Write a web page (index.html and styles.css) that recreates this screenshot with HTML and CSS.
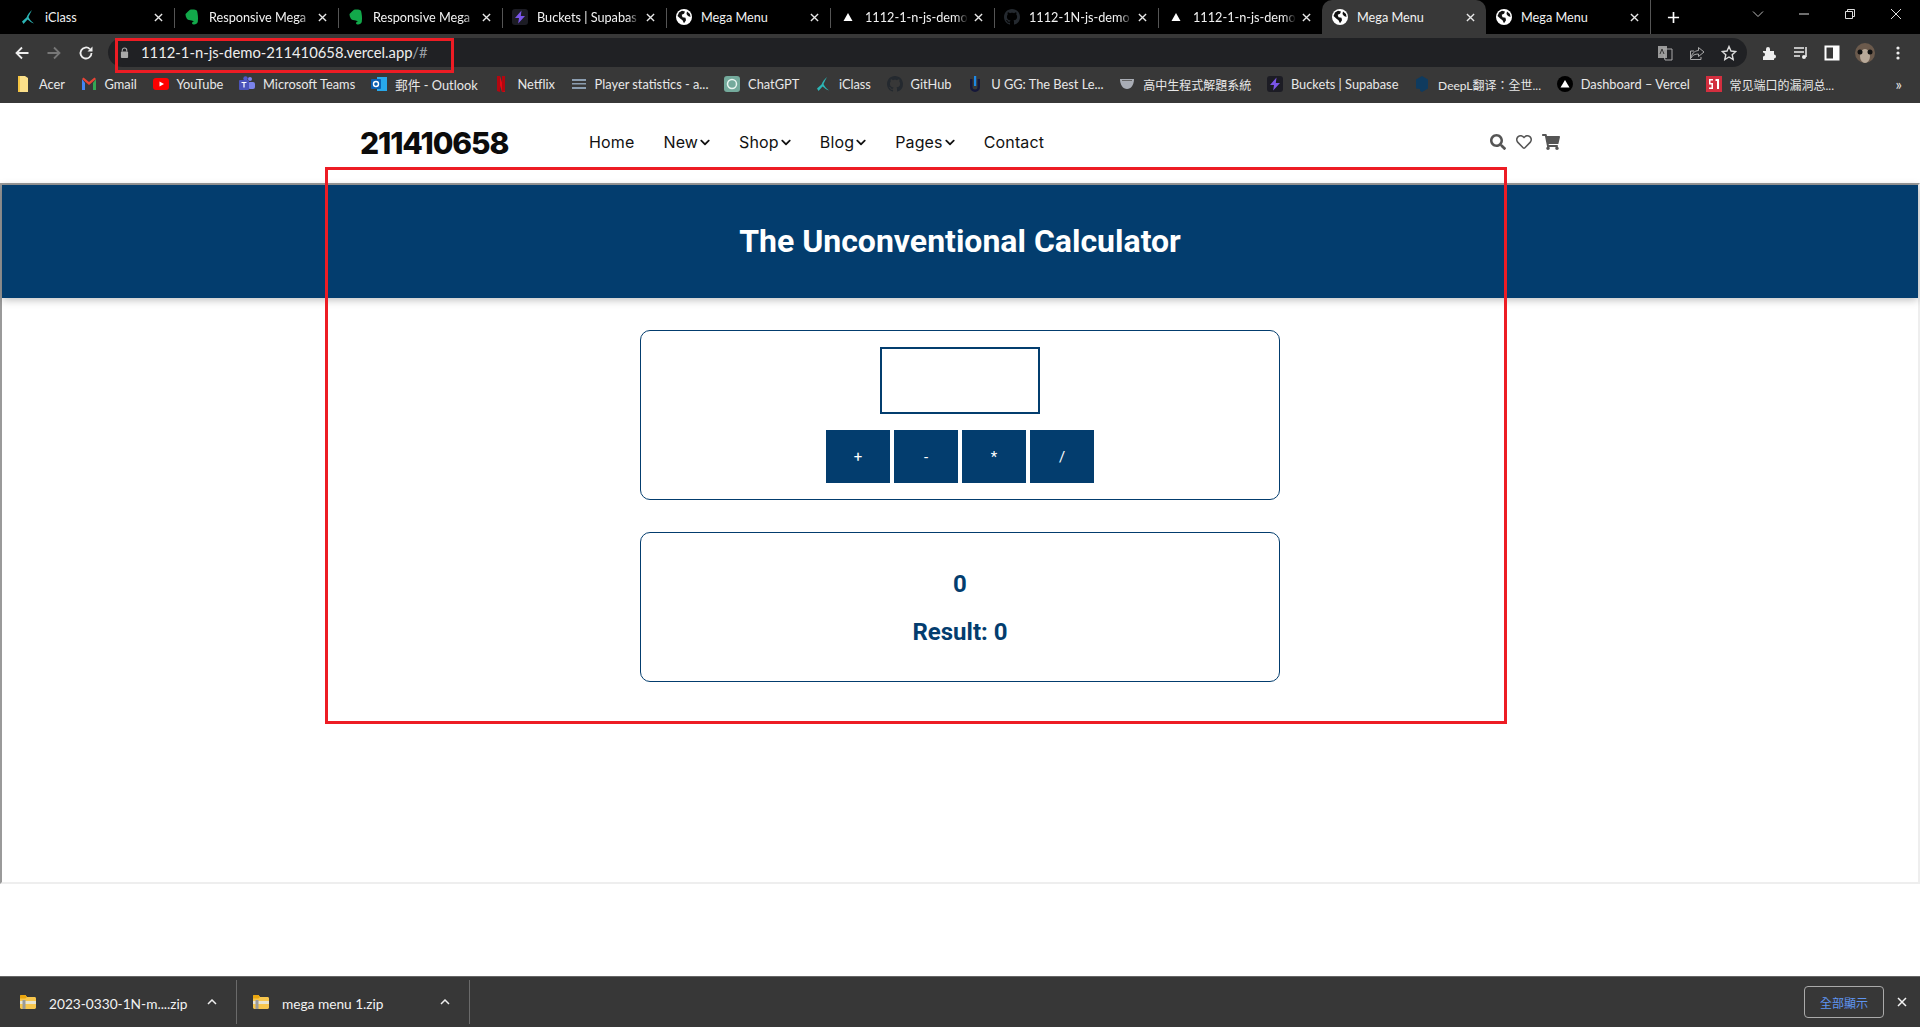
FILE: index.html
```html
<!DOCTYPE html>
<html lang="en">

<head>
    <meta charset="UTF-8">
    <title>Mega Menu</title>
    <link rel="stylesheet" href="styles.css">
</head>

<body>
    <svg class="sprite" xmlns="http://www.w3.org/2000/svg">
        <symbol id="i-globe" viewBox="0 0 16 16">
            <circle cx="8" cy="8" r="8" fill="#fff"/>
            <path d="M3 3.500l3-1.700 3 .7-1 2.200-2.300 1 .8 2.500 3 .5.500 2.500-2 3-1.500-3-2-1.500L1.500 7z M11 2.500l3 2.500.5 3-2.500-1-1.500-2z" fill="#111"/>
        </symbol>
        <symbol id="i-triangle" viewBox="0 0 16 16">
            <path d="M8 4l4.500 8h-9z" fill="#fff"/>
        </symbol>
        <symbol id="i-iclass" viewBox="0 0 16 16">
            <path d="M12 1C9.500 3 7.500 6 6.500 8.500L2 12.500 3.500 15 7.500 10.500C9.500 12 11 13.500 14 14.500 11.500 12.500 9.500 10.500 8.500 8 9.500 5.500 11 3 12 1z" fill="#2cb5b5"/>
        </symbol>
        <symbol id="i-evernote" viewBox="0 0 16 16">
            <path d="M4 2.500L6 .8c2-.6 6-.4 7 1 .8 3 1.400 7 .8 11-.5 2.500-3.300 3.200-5 2.500-1.500-1-.5-3 1.500-2.800-1.500-.5-3.500-1.500-5.300-1.500C2.500 10.500 1.500 7 1.500 5z" fill="#12a84a"/>
        </symbol>
        <symbol id="i-bolt" viewBox="0 0 16 16">
            <rect width="16" height="16" rx="3" fill="#1c1c24"/>
            <path d="M9.500 1.500L3 9h4l-.8 5.500L13 7H8.800z" fill="#7a55e8"/>
        </symbol>
        <symbol id="i-github" viewBox="0 0 16 16">
            <path d="M8 0C3.580 0 0 3.580 0 8c0 3.540 2.290 6.530 5.470 7.590.4.070.55-.17.55-.38 0-.19-.01-.82-.01-1.490-2.010.37-2.530-.49-2.690-.94-.09-.23-.48-.94-.82-1.130-.28-.15-.68-.52-.01-.53.630-.01 1.080.580 1.230.820.720 1.210 1.870.870 2.330.660.070-.520.280-.870.510-1.070-1.780-.2-3.640-.89-3.640-3.950 0-.870.310-1.590.820-2.150-.08-.2-.360-1.020.080-2.120 0 0 .670-.210 2.200.820.640-.180 1.320-.270 2-.270s1.360.090 2 .270c1.530-1.040 2.200-.820 2.200-.820.440 1.100.160 1.920.080 2.120.510.560.820 1.270.820 2.150 0 3.070-1.870 3.750-3.650 3.950.290.250.540.730.540 1.480 0 1.070-.010 1.930-.010 2.200 0 .210.150.460.550.380A8.010 8.010 0 0016 8c0-4.420-3.580-8-8-8z" fill="#24292f"/>
        </symbol>
        <symbol id="i-folder" viewBox="0 0 16 14">
            <path d="M0 1.500C0 .7.600 0 1.400 0h4l1.600 2h7.600c.8 0 1.400.6 1.400 1.400v9.200c0 .8-.6 1.400-1.400 1.400H1.400C.6 14 0 13.400 0 12.600z" fill="#f7c64d"/>
            <path d="M0 1.500C0 .7.600 0 1.400 0h4l1.600 2-1.600 1.500H0z" fill="#eaa50d"/>
            <rect x="0" y="6" width="16" height="3" fill="#e8e4d0"/>
            <rect x="2.500" y="5" width="3" height="9" fill="#9a9a9a"/>
        </symbol>
        <symbol id="i-chevron" viewBox="0 0 448 512">
            <path d="M207.029 381.476L12.686 187.132c-9.373-9.373-9.373-24.569 0-33.941l22.667-22.667c9.357-9.357 24.522-9.375 33.901-.04L224 284.505l154.745-154.021c9.379-9.335 24.544-9.317 33.901.04l22.667 22.667c9.373 9.373 9.373 24.569 0 33.941L240.971 381.476c-9.373 9.372-24.569 9.372-33.942 0z"/>
        </symbol>
        <symbol id="i-close" viewBox="0 0 10 10">
            <path d="M1 1l8 8M9 1L1 9" stroke="currentColor" stroke-width="1.500" fill="none"/>
        </symbol>
    </svg>

    <div class="tabstrip">
        <div class="tab">
            <svg class="favicon"><use href="#i-iclass"/></svg>
            <span class="tab-title">iClass</span>
            <svg class="tab-close"><use href="#i-close"/></svg>
        </div>
        <div class="tab sep">
            <svg class="favicon"><use href="#i-evernote"/></svg>
            <span class="tab-title fade">Responsive Mega</span>
            <svg class="tab-close"><use href="#i-close"/></svg>
        </div>
        <div class="tab sep">
            <svg class="favicon"><use href="#i-evernote"/></svg>
            <span class="tab-title fade">Responsive Mega</span>
            <svg class="tab-close"><use href="#i-close"/></svg>
        </div>
        <div class="tab sep">
            <svg class="favicon"><use href="#i-bolt"/></svg>
            <span class="tab-title fade">Buckets | Supabas</span>
            <svg class="tab-close"><use href="#i-close"/></svg>
        </div>
        <div class="tab sep">
            <svg class="favicon"><use href="#i-globe"/></svg>
            <span class="tab-title">Mega Menu</span>
            <svg class="tab-close"><use href="#i-close"/></svg>
        </div>
        <div class="tab sep">
            <svg class="favicon"><use href="#i-triangle"/></svg>
            <span class="tab-title fade">1112-1-n-js-demo</span>
            <svg class="tab-close"><use href="#i-close"/></svg>
        </div>
        <div class="tab sep">
            <svg class="favicon"><use href="#i-github"/></svg>
            <span class="tab-title fade">1112-1N-js-demo</span>
            <svg class="tab-close"><use href="#i-close"/></svg>
        </div>
        <div class="tab sep">
            <svg class="favicon"><use href="#i-triangle"/></svg>
            <span class="tab-title fade">1112-1-n-js-demo</span>
            <svg class="tab-close"><use href="#i-close"/></svg>
        </div>
        <div class="tab active">
            <svg class="favicon"><use href="#i-globe"/></svg>
            <span class="tab-title">Mega Menu</span>
            <svg class="tab-close"><use href="#i-close"/></svg>
        </div>
        <div class="tab">
            <svg class="favicon"><use href="#i-globe"/></svg>
            <span class="tab-title">Mega Menu</span>
            <svg class="tab-close"><use href="#i-close"/></svg>
        </div>
        <div class="new-tab">
            <svg viewBox="0 0 14 14"><path d="M7 1v12M1 7h12" stroke="#fff" stroke-width="1.800"/></svg>
        </div>
        <div class="window-controls">
            <svg viewBox="0 0 12 12"><path d="M1 3.500l5 5 5-5" stroke="#bbb" fill="none"/></svg>
            <svg viewBox="0 0 12 12"><path d="M1 6h10" stroke="#ddd"/></svg>
            <svg viewBox="0 0 12 12"><path d="M1.500 3.500h7v7h-7zM3.500 3.500v-2h7v7h-2" stroke="#ddd" fill="none"/></svg>
            <svg viewBox="0 0 12 12"><path d="M1 1l10 10M11 1L1 11" stroke="#ddd" fill="none"/></svg>
        </div>
    </div>

    <div class="toolbar">
        <div class="nav-buttons">
            <svg viewBox="0 0 16 16"><path d="M14.500 8H2.500M8 2.500L2.500 8 8 13.500" stroke="#eee" stroke-width="1.800" fill="none"/></svg>
            <svg viewBox="0 0 16 16"><path d="M1.500 8h12M8 2.500L13.500 8 8 13.500" stroke="#777" stroke-width="1.800" fill="none"/></svg>
            <svg viewBox="0 0 16 16"><path d="M13.500 8a5.500 5.500 0 1 1-1.600-3.900" stroke="#eee" stroke-width="1.800" fill="none"/><path d="M14.500 1.500v5h-5z" fill="#eee"/></svg>
        </div>
        <div class="omnibox">
            <svg class="lock" viewBox="0 0 10 12"><path d="M2.500 5V3.500a2.500 2.500 0 0 1 5 0V5" stroke="#aaa" stroke-width="1.200" fill="none"/><rect x="1" y="5" width="8" height="7" rx="1" fill="#aaa"/></svg>
            <span class="url">1112-1-n-js-demo-211410658.vercel.app<span class="url-rest">/#</span></span>
            <div class="omni-actions">
                <svg viewBox="0 0 16 16"><rect x="1" y="1" width="9" height="12" fill="#999"/><path d="M6 4h9v11H8z" fill="none" stroke="#aaa"/><path d="M3 9l2-5 2 5" stroke="#333" fill="none"/></svg>
                <svg viewBox="0 0 16 16"><path d="M9.500 2.500L15 7l-5.500 4.500V9C6 9 3.500 10 2 13c.5-4 3-7 7.500-7.500zM12 12v2.500H1.500V6H5" stroke="#aaa" fill="none"/></svg>
                <svg viewBox="0 0 16 16"><path d="M8 1.500l2 4.500 4.800.5-3.600 3.200 1 4.800L8 12l-4.200 2.500 1-4.800L1.200 6.500 6 6z" stroke="#ddd" stroke-width="1.400" fill="none"/></svg>
            </div>
        </div>
        <div class="toolbar-actions">
            <svg viewBox="0 0 16 16"><path d="M1 6h3V4a2 2 0 0 1 4 0v2h4v3.500a2 2 0 0 1 0 4V15H1v-3.500a2 2 0 0 0 0-4z" fill="#eee"/></svg>
            <svg viewBox="0 0 16 16"><path d="M1 3h10M1 7h10M1 11h6" stroke="#eee" stroke-width="1.400"/><path d="M13 2v10" stroke="#eee" stroke-width="1.500"/><circle cx="11" cy="12" r="2" fill="#eee"/></svg>
            <svg viewBox="0 0 16 16"><rect x="1.500" y="1.500" width="13" height="13" fill="none" stroke="#fff" stroke-width="2"/><rect x="9" y="2" width="5" height="12" fill="#fff"/></svg>
            <svg class="avatar" viewBox="0 0 20 20"><ellipse cx="10" cy="10" rx="10" ry="10" fill="#6b5a4c"/><ellipse cx="10" cy="13" rx="5" ry="7" fill="#b8a999"/><circle cx="5" cy="9" r="2.500" fill="#111"/><circle cx="15" cy="9" r="2.500" fill="#111"/></svg>
            <svg viewBox="0 0 16 16"><circle cx="8" cy="3" r="1.600" fill="#eee"/><circle cx="8" cy="8" r="1.600" fill="#eee"/><circle cx="8" cy="13" r="1.600" fill="#eee"/></svg>
        </div>
    </div>

    <div class="bookmarks">
        <div class="bookmark">
            <svg class="favicon" viewBox="0 0 16 16"><path d="M3 0h7l3 2v14H3z" fill="#fbe08a"/><path d="M3 0h2v16H3z" fill="#f5c542"/></svg>
            <span>Acer</span>
        </div>
        <div class="bookmark">
            <svg class="favicon" viewBox="0 0 16 16"><path d="M1 3v11h3V7z" fill="#4285f4"/><path d="M15 3v11h-3V7z" fill="#34a853"/><path d="M1 3l7 6 7-6-1.500-1.500L8 6 2.500 1.500z" fill="#ea4335"/></svg>
            <span>Gmail</span>
        </div>
        <div class="bookmark">
            <svg class="favicon" viewBox="0 0 16 16"><rect y="2" width="16" height="12" rx="3" fill="#f00"/><path d="M6.500 5.500L11 8l-4.500 2.500z" fill="#fff"/></svg>
            <span>YouTube</span>
        </div>
        <div class="bookmark">
            <svg class="favicon" viewBox="0 0 16 16"><circle cx="11" cy="3" r="2" fill="#7b83eb"/><rect x="9" y="6" width="7" height="7" rx="2" fill="#7b83eb"/><circle cx="6.500" cy="2.500" r="2.200" fill="#5059c9"/><rect x="0" y="4" width="10" height="10" rx="1" fill="#4b53bc"/><path d="M2.500 6.500h5M5 6.500v5" stroke="#fff" stroke-width="1.200"/></svg>
            <span>Microsoft Teams</span>
        </div>
        <div class="bookmark">
            <svg class="favicon" viewBox="0 0 16 16"><rect x="6" y="1" width="10" height="14" fill="#28a8ea"/><rect x="0" y="3" width="10" height="10" rx="1" fill="#0a5fb0"/><circle cx="5" cy="8" r="2.500" fill="none" stroke="#fff" stroke-width="1.400"/></svg>
            <span>郵件 - Outlook</span>
        </div>
        <div class="bookmark">
            <svg class="favicon" viewBox="0 0 16 16"><path d="M4 0h3l5 16H9z" fill="#e50914"/><path d="M4 0h3v16l-3-1zM9 0h3v15l-3 1z" fill="#b20710"/></svg>
            <span>Netflix</span>
        </div>
        <div class="bookmark">
            <svg class="favicon" viewBox="0 0 16 16"><path d="M1 3h14v2H1zM1 7h14v1.500H1zM1 11h14v2H1z" fill="#8b9db0"/></svg>
            <span>Player statistics - a...</span>
        </div>
        <div class="bookmark">
            <svg class="favicon" viewBox="0 0 16 16"><rect width="16" height="16" rx="3" fill="#74aa9c"/><circle cx="8" cy="8" r="4.500" fill="none" stroke="#e8f4f0" stroke-width="1.500"/></svg>
            <span>ChatGPT</span>
        </div>
        <div class="bookmark">
            <svg class="favicon"><use href="#i-iclass"/></svg>
            <span>iClass</span>
        </div>
        <div class="bookmark">
            <svg class="favicon"><use href="#i-github"/></svg>
            <span>GitHub</span>
        </div>
        <div class="bookmark">
            <svg class="favicon" viewBox="0 0 16 16"><path d="M3 3v8a5 5 0 0 0 10 0V3h-2.500v8a2.500 2.500 0 0 1-5 0V3z" fill="#15173a"/><rect x="7" y="0" width="2.200" height="10" fill="#1e88e5"/></svg>
            <span>U GG: The Best Le...</span>
        </div>
        <div class="bookmark">
            <svg class="favicon" viewBox="0 0 16 16"><path d="M1 3h14c0 6-3 10-7 10S1 9 1 3z" fill="#a9adb5"/><path d="M3 4.500h10" stroke="#666"/></svg>
            <span class="cjk">高中生程式解題系統</span>
        </div>
        <div class="bookmark">
            <svg class="favicon"><use href="#i-bolt"/></svg>
            <span>Buckets | Supabase</span>
        </div>
        <div class="bookmark">
            <svg class="favicon" viewBox="0 0 16 16"><path d="M8 0l6 3.500v9L8 16l-2-1.200V13L2 12.500v-9z" fill="#0f3b5f"/></svg>
            <span class="cjk">DeepL翻译：全世...</span>
        </div>
        <div class="bookmark">
            <svg class="favicon" viewBox="0 0 16 16"><circle cx="8" cy="8" r="8" fill="#000"/><path d="M8 4l4.500 7.500h-9z" fill="#fff"/></svg>
            <span>Dashboard – Vercel</span>
        </div>
        <div class="bookmark">
            <svg class="favicon" viewBox="0 0 16 16"><rect width="16" height="16" fill="#d32f3f"/><path d="M3 3h4v1.500H4.500V7H7v6H3v-1.500h2.500V8.500H3zM9.500 3H13v10h-2V5H9.500z" fill="#fff"/></svg>
            <span class="cjk">常见端口的漏洞总...</span>
        </div>
        <div class="bookmark-more">»</div>
    </div>

    <header class="site-header">
        <div class="site-inner">
            <div class="site-left">
                <div class="logo">211410658</div>
                <nav class="site-nav">
                    <a>Home</a>
                    <a>New <svg class="caret"><use href="#i-chevron"/></svg></a>
                    <a>Shop <svg class="caret"><use href="#i-chevron"/></svg></a>
                    <a>Blog <svg class="caret"><use href="#i-chevron"/></svg></a>
                    <a>Pages <svg class="caret"><use href="#i-chevron"/></svg></a>
                    <a>Contact</a>
                </nav>
            </div>
            <div class="site-icons">
                <svg viewBox="0 0 512 512"><path d="M505 442.700L405.300 343c-4.500-4.500-10.600-7-17-7H372c27.600-35.300 44-79.700 44-128C416 93.100 322.900 0 208 0S0 93.100 0 208s93.100 208 208 208c48.300 0 92.700-16.400 128-44v16.300c0 6.400 2.500 12.500 7 17l99.700 99.700c9.400 9.400 24.600 9.400 33.900 0l28.300-28.300c9.400-9.400 9.400-24.600.1-34zM208 336c-70.700 0-128-57.200-128-128 0-70.700 57.200-128 128-128 70.700 0 128 57.200 128 128 0 70.700-57.200 128-128 128z"/></svg>
                <svg viewBox="0 0 512 512"><path d="M458.400 64.300C400.600 15.700 311.300 23 256 79.300 200.700 23 111.400 15.600 53.600 64.300-21.600 127.600-10.600 230.800 43 285.500l175.400 178.700c10 10.200 23.400 15.900 37.600 15.900 14.300 0 27.600-5.600 37.600-15.800L469 285.600c53.500-54.700 64.700-157.900-10.600-221.300zm-23.600 187.500L259.400 430.500c-2.400 2.400-4.400 2.400-6.800 0L77.200 251.800c-36.500-37.200-43.900-107.600 7.300-150.700 38.900-32.700 98.900-27.800 136.500 10.500l35 35.700 35-35.700c37.800-38.500 97.800-43.200 136.500-10.600 51.100 43.100 43.500 113.900 7.300 150.800z"/></svg>
                <svg class="cart" viewBox="0 0 576 512"><path d="M528.120 301.319l47.273-208C578.806 78.301 567.391 64 551.990 64H159.208l-9.166-44.810C147.758 8.021 137.930 0 126.529 0H24C10.745 0 0 10.745 0 24v16c0 13.255 10.745 24 24 24h69.883l70.248 343.435C147.325 417.100 136 435.222 136 456c0 30.928 25.072 56 56 56s56-25.072 56-56c0-15.674-6.447-29.835-16.824-40h209.647C430.447 426.165 424 440.326 424 456c0 30.928 25.072 56 56 56s56-25.072 56-56c0-22.172-12.888-41.332-31.579-50.405l5.517-24.276c3.413-15.018-8.002-29.319-23.403-29.319H218.117l-6.545-32h293.145c11.206 0 20.920-7.754 23.403-18.681z"/></svg>
            </div>
        </div>
    </header>

    <div class="demo-frame">
        <div class="calc-header">
            <h1>The Unconventional Calculator</h1>
        </div>
        <section class="card">
            <input class="calc-input" type="number">
            <div class="calc-actions">
                <button>+</button>
                <button>-</button>
                <button>*</button>
                <button>/</button>
            </div>
        </section>
        <section class="card results">
            <h2>0</h2>
            <h2>Result: 0</h2>
        </section>
    </div>

    <div class="spacer"></div>

    <footer class="download-bar">
        <div class="download">
            <svg class="dl-icon"><use href="#i-folder"/></svg>
            <span class="dl-name">2023-0330-1N-m....zip</span>
            <svg class="dl-caret" viewBox="0 0 10 6"><path d="M1 5l4-4 4 4" stroke="#eee" stroke-width="1.500" fill="none"/></svg>
        </div>
        <div class="download">
            <svg class="dl-icon"><use href="#i-folder"/></svg>
            <span class="dl-name">mega menu 1.zip</span>
            <svg class="dl-caret" viewBox="0 0 10 6"><path d="M1 5l4-4 4 4" stroke="#eee" stroke-width="1.500" fill="none"/></svg>
        </div>
        <button class="show-all">全部顯示</button>
        <svg class="dl-close"><use href="#i-close"/></svg>
    </footer>

    <!-- red annotation boxes drawn on top of the screenshot -->
    <div class="mark mark-url"></div>
    <div class="mark mark-page"></div>
</body>

</html>
```

FILE: styles.css
```css
* {
    box-sizing: border-box;
}

body {
    margin: 0;
    height: 100vh;
    display: flex;
    flex-direction: column;
    background-color: white;
    font-family: 'Roboto', sans-serif;
    overflow: hidden;
    position: relative;
}

.sprite {
    display: none;
}

/* browser chrome */
.tabstrip {
    height: 34px;
    background-color: #000;
    display: flex;
    padding-left: 10px;
    color: #f2f2f2;
    font-family: 'Lato', 'Noto Sans CJK TC', sans-serif;
    font-size: 12.7px;
}

.tab {
    width: 164px;
    height: 34px;
    display: flex;
    align-items: center;
    padding: 0 11px 0 10px;
    position: relative;
}

.tab.sep::before {
    content: "";
    position: absolute;
    left: 0;
    top: 8px;
    height: 20px;
    width: 1px;
    background-color: #555;
}

.tab.active {
    background-color: #383838;
    border-radius: 10px 10px 0 0;
}

.favicon {
    width: 16px;
    height: 16px;
    flex: none;
}

.tab-title {
    flex: 1;
    margin-left: 9px;
    white-space: nowrap;
}

.tab-title.fade {
    -webkit-mask-image: linear-gradient(to right, black 88%, transparent);
    mask-image: linear-gradient(to right, black 88%, transparent);
}

.tab-close {
    width: 9px;
    height: 9px;
    flex: none;
    margin-left: 6px;
    color: #e8e8e8;
}

.new-tab {
    width: 46px;
    height: 34px;
    display: flex;
    align-items: center;
    justify-content: center;
    border-left: 1px solid #555;
    background-clip: padding-box;
}

.new-tab svg {
    width: 13px;
    height: 13px;
}

.window-controls {
    margin-left: auto;
    display: flex;
    align-items: flex-start;
    gap: 34px;
    padding: 8px 18px 0 0;
}

.window-controls svg {
    width: 12px;
    height: 12px;
}

.toolbar {
    height: 33px;
    background-color: #383838;
    display: flex;
    align-items: center;
    padding: 4px 0 0;
}

.nav-buttons {
    display: flex;
    width: 108px;
    padding-left: 14px;
    gap: 16px;
}

.nav-buttons svg {
    width: 16px;
    height: 16px;
}

.omnibox {
    width: 1639px;
    height: 29px;
    background-color: #202124;
    border-radius: 15px;
    display: flex;
    align-items: center;
    padding: 0 10px 0 12px;
}

.lock {
    width: 9px;
    height: 11px;
}

.url {
    margin-left: 12px;
    padding-bottom: 2px;
    font-family: 'Lato', sans-serif;
    font-size: 14.8px;
    color: #eee;
}

.url-rest {
    color: #9aa0a6;
}

.omni-actions {
    margin-left: auto;
    display: flex;
    gap: 16px;
}

.omni-actions svg {
    width: 16px;
    height: 16px;
}

.toolbar-actions {
    flex: 1;
    display: flex;
    align-items: center;
    padding-left: 15px;
    gap: 15px;
}

.toolbar-actions svg {
    width: 16px;
    height: 16px;
}

.toolbar-actions .avatar {
    width: 20px;
    height: 20px;
}

.bookmarks {
    height: 36px;
    background-color: #383838;
    display: flex;
    align-items: center;
    padding: 0 0 2px 15px;
    gap: 15.7px;
    color: #e8e8e8;
    font-family: 'Lato', 'Noto Sans CJK TC', sans-serif;
    font-size: 12.8px;
    white-space: nowrap;
}

.bookmark {
    display: flex;
    align-items: center;
    gap: 8px;
}

.bookmark .cjk {
    font-size: 12px;
}

.bookmark-more {
    margin-left: auto;
    padding-right: 18px;
    font-size: 15px;
}

/* page inside the browser */
.site-header {
    height: 80px;
    flex: none;
    display: flex;
    justify-content: center;
    align-items: center;
    padding-bottom: 2px;
}

.site-inner {
    width: 1200px;
    display: flex;
    justify-content: space-between;
    align-items: center;
}

.site-left {
    display: flex;
    align-items: center;
}

.logo {
    width: 229px;
    margin-top: 2px;
    font-family: 'Inter', sans-serif;
    font-weight: 800;
    font-size: 30px;
    letter-spacing: -1.1px;
    color: #0c0c0c;
}

.site-nav {
    display: flex;
    gap: 29px;
    font-family: 'Inter', sans-serif;
    font-size: 16px;
    letter-spacing: 0.15px;
    color: #111;
}

.site-nav a {
    display: flex;
    align-items: center;
    gap: 2px;
}

.caret {
    width: 10px;
    height: 11px;
    fill: #111;
}

.site-icons {
    display: flex;
    align-items: center;
    gap: 10px;
}

.site-icons svg {
    width: 16px;
    height: 16px;
    fill: #555;
}

.site-icons .cart {
    width: 18px;
}

.demo-frame {
    height: 701px;
    flex: none;
    border: 2px solid;
    border-color: #9a9a9a #eeeeee #eeeeee #9a9a9a;
}

.calc-header {
    height: 113px;
    background-color: #033d6e;
    box-shadow: 0 2px 8px rgba(0, 0, 0, 0.26);
    display: flex;
    align-items: center;
    justify-content: center;
    margin-bottom: 32px;
    padding-bottom: 2px;
}

h1 {
    margin: 0;
    color: white;
    font-size: 32px;
    font-weight: 700;
}

.card {
    width: 640px;
    margin: 0 auto 32px;
    padding: 16px;
    border: 1px solid #033d6e;
    border-radius: 10px;
    text-align: center;
}

.calc-input {
    display: block;
    width: 160px;
    height: 67px;
    margin: 0 auto;
    border: 2px solid #033d6e;
    background: white;
    outline: none;
}

.calc-actions {
    display: flex;
    justify-content: center;
    gap: 4px;
    margin-top: 16px;
}

.calc-actions button {
    width: 64px;
    height: 53px;
    border: none;
    background-color: #033d6e;
    color: white;
    font-family: 'Roboto', sans-serif;
    font-size: 15px;
}

.results {
    padding: 37px 16px 35px;
}

h2 {
    margin: 0;
    color: #033d6e;
    font-size: 24px;
    font-weight: 700;
    line-height: 28px;
}

h2 + h2 {
    margin-top: 20px;
}

.spacer {
    flex: 1;
}

.download-bar {
    height: 51px;
    flex: none;
    background-color: #373737;
    border-top: 1px solid #666;
    display: flex;
    align-items: center;
    padding-left: 4px;
    color: #f2f2f2;
    font-family: 'Lato', sans-serif;
    font-size: 13.7px;
}

.download {
    width: 233px;
    height: 44px;
    display: flex;
    align-items: center;
    padding-left: 16px;
    border-right: 1px solid #6a6a6a;
}

.dl-icon {
    width: 16px;
    height: 14px;
    flex: none;
}

.dl-name {
    margin-left: 13px;
    padding-top: 2px;
}

.dl-caret {
    width: 10px;
    height: 6px;
    margin-left: auto;
    margin-right: 19px;
}

.show-all {
    margin-left: auto;
    width: 80px;
    height: 32px;
    border: 1px solid #aaa;
    border-radius: 4px;
    background: transparent;
    color: #5f95f0;
    font-family: 'Noto Sans CJK TC', sans-serif;
    font-size: 12px;
}

.dl-close {
    width: 10px;
    height: 10px;
    margin: 0 13px 0 13px;
    color: #f5f5f5;
}

/* annotations */
.mark {
    position: absolute;
    border: 3px solid #ed1c24;
    pointer-events: none;
}

.mark-url {
    left: 115px;
    top: 38px;
    width: 339px;
    height: 35px;
}

.mark-page {
    left: 325px;
    top: 167px;
    width: 1182px;
    height: 557px;
}
```
